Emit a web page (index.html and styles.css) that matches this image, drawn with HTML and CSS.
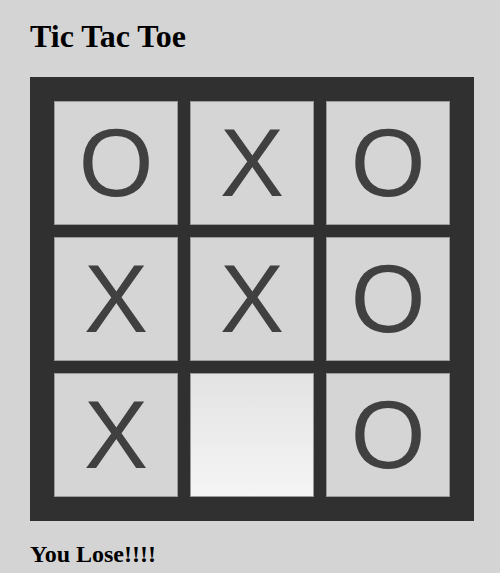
FILE: index.html
```html
<!DOCTYPE html>
<html lang="en">
<head>
    <meta charset="UTF-8">
    <meta name="viewport" content="width=device-width, initial-scale=1.0">
    <title>Tic Tac Toe</title>
    <link rel="stylesheet" href="styles.css">
</head>
<body>
    <h1>Tic Tac Toe</h1>
    <div class="board">
        <button class="cell" disabled>O</button>
        <button class="cell" disabled>X</button>
        <button class="cell" disabled>O</button>
        <button class="cell" disabled>X</button>
        <button class="cell" disabled>X</button>
        <button class="cell" disabled>O</button>
        <button class="cell" disabled>X</button>
        <button class="cell empty"></button>
        <button class="cell" disabled>O</button>
    </div>
    <h2 class="status">You Lose!!!!</h2>
</body>
</html>
```

FILE: styles.css
```css
body {
    margin: 0;
    padding: 0 30px;
    background-color: #d4d4d4;
    font-family: "Liberation Serif", "Times New Roman", serif;
    color: #000;
}
h1 {
    font-size: 32px;
    margin: 18px 0 21.5px;
}
.board {
    width: 396px;
    padding: 24px;
    background-color: #303030;
    display: grid;
    grid-template-columns: repeat(3, 124px);
    grid-auto-rows: 124px;
    gap: 12px;
}
.cell {
    margin: 0;
    padding: 0;
    border: 1px solid #9a9a9a;
    background-color: #d5d5d5;
    color: #404040;
    font-family: "Liberation Sans", Arial, sans-serif;
    font-size: 96px;
    line-height: 1;
    display: flex;
    align-items: center;
    justify-content: center;
}
.cell.empty {
    background: linear-gradient(#e3e3e3, #f5f5f5);
    cursor: pointer;
}
.status {
    font-size: 24px;
    margin: 20px 0 0;
}
```
